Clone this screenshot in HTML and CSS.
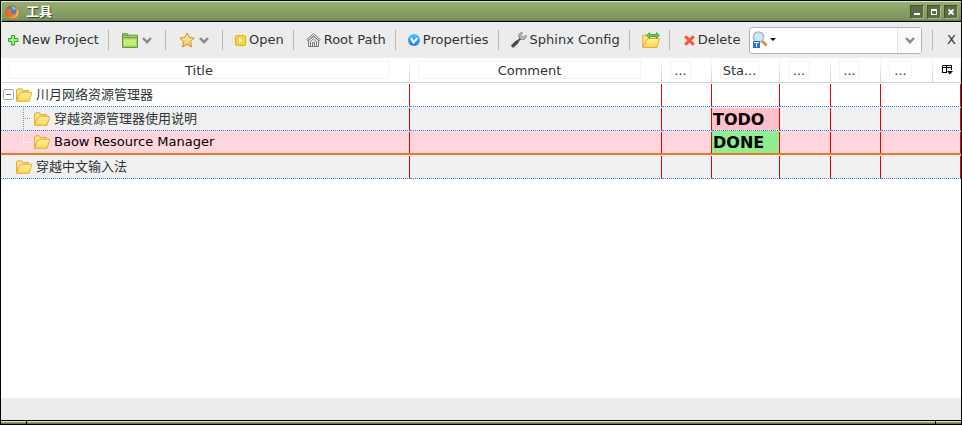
FILE: index.html
```html
<!DOCTYPE html>
<html lang="zh-CN">
<head>
<meta charset="utf-8">
<title>工具</title>
<link rel="stylesheet" href="styles.css">
</head>
<body>
<svg class="defs" aria-hidden="true">
  <defs>
    <linearGradient id="gold" x1="0" y1="0" x2="0" y2="1"><stop offset="0" stop-color="#fff0a0"/><stop offset="1" stop-color="#fbd650"/></linearGradient>
    <linearGradient id="star" x1="0" y1="0" x2="0" y2="1"><stop offset="0" stop-color="#fff8d0"/><stop offset="1" stop-color="#f8c040"/></linearGradient>
    <linearGradient id="blue" x1="0" y1="0" x2="0" y2="1"><stop offset="0" stop-color="#4cc4ff"/><stop offset="1" stop-color="#1a78ee"/></linearGradient>
    <linearGradient id="fox" x1="0" y1="0" x2="1" y2="1"><stop offset="0" stop-color="#b8542c"/><stop offset=".5" stop-color="#e86a1c"/><stop offset="1" stop-color="#ffc040"/></linearGradient>
    <symbol id="folder" viewBox="0 0 17 14">
      <path d="M1.500 12.500V2l1-1.200h4L8 2.500h5.500V5" fill="#fbe080" stroke="#e2ac32"/>
      <path d="M1.500 13.300 4 6.500 6 5l1-.8h9.300v2L14 13.300z" fill="url(#gold)" stroke="#e2ac32"/>
    </symbol>
    <symbol id="chevron" viewBox="0 0 10 7"><path d="m1 1 4 4.200L9 1" fill="none" stroke="#8c8c8c" stroke-width="2.500"/></symbol>
  </defs>
</svg>
<div class="window">
  <header class="titlebar">
    <svg class="fox" width="14" height="14" viewBox="0 0 14 14"><circle cx="7" cy="7" r="6.800" fill="url(#fox)"/><circle cx="7.500" cy="5.500" r="4.300" fill="#4a80c4"/><path d="M7 1.500c2 .2 3.500 1 4 2.500L9 5 7 3z" fill="#90c4ee"/><path d="M1 3l2 1 2.500.2L7 6 5.500 7l1 1.500 3 .2C8 11 5 11.500 3 9.500z" fill="#e8742a"/><path d="M11.500 3c2.300 3 1.500 7-1.500 9 2-3 2-5 1.500-9z" fill="#ffd060"/></svg>
    <h1>工具</h1>
    <div class="controls">
      <button aria-label="Minimize"><svg width="8" height="8"><path d="M1 5h6v2H1z" fill="#fff"/></svg></button>
      <button aria-label="Maximize"><svg width="8" height="8"><path d="M1 1h6v6H1zM2 3v3h4V3z" fill="#fff" fill-rule="evenodd"/></svg></button>
      <button aria-label="Close window"><svg width="8" height="8"><path d="m1.500 1.500 5 5m0-5-5 5" stroke="#fff" stroke-width="2"/></svg></button>
    </div>
  </header>
  <nav class="toolbar">
    <button class="first"><svg width="11" height="11" viewBox="0 0 11 11"><path d="M3.500 .5h3v3h3.500v3H6.500V10h-3V6.500H.5v-3h3z" fill="#a4f074" stroke="#2fa52f"/></svg>New Project</button>
    <button class="menu" aria-label="New folder"><svg width="16" height="15" viewBox="0 0 16 15"><path d="M.5 14.500V.7h5l1 1.500h9v12.300z" fill="#a5cf68" stroke="#619a38"/><path d="M1 4.500h14M1.500 2.500h5" stroke="#6fa346"/><path d="M2 6.500h12v6H2z" fill="#c4ec80"/></svg><svg width="10" height="7"><use href="#chevron"/></svg></button>
    <button class="menu" aria-label="Bookmarks"><svg width="16" height="16" viewBox="0 0 16 16"><path d="m8 1 2.200 4.500 5 .6-3.700 3.600 1 5.200L8 12.400l-4.500 2.500 1-5.200L.8 6.100l5-.6z" fill="url(#star)" stroke="#d78426"/></svg><svg width="10" height="7"><use href="#chevron"/></svg></button>
    <button><svg width="11" height="11" viewBox="0 0 11 11"><rect x=".5" y=".5" width="10" height="10" rx="1" fill="#f4d438" stroke="#dfb51c"/><path d="M4 2.500v6L7.500 5.500z" fill="#fff"/></svg>Open</button>
    <button><svg width="15" height="14" viewBox="0 0 15 14"><g fill="none" stroke="#777"><path d="M.7 6.500 7.500.7l6.800 5.800-1 1.200-5.800-5-5.800 5z" fill="#fff"/><path d="M2.500 7.500v6h10v-6L7.500 3.500z" fill="#eee"/><path d="M4.500 13V8.500L7.500 6l3 2.500V13M6.500 13V9.500h2V13"/></g></svg>Root Path</button>
    <button><svg width="12" height="12" viewBox="0 0 12 12"><circle cx="6" cy="6" r="6" fill="url(#blue)"/><path d="m3 4 2.500 4.500L9.500 4" fill="none" stroke="#fff" stroke-width="2"/></svg>Properties</button>
    <button><svg width="16" height="16" viewBox="0 0 16 16"><path d="M9.500 6.500 6 10" stroke="#555" stroke-width="2"/><path d="M6 10l-4 3.800" stroke="#494949" stroke-width="3.400" stroke-linecap="round"/><path d="M8 5c-1-2.500 1-4.800 3.500-4.300L10 2.500l.7 2.300 2.300.4 2-2c.8 2.500-1.500 5-4.300 4.300z" fill="#c5c5c5" stroke="#808080"/></svg>Sphinx Config</button>
    <button aria-label="Exchange folder"><svg width="18" height="17" viewBox="0 0 18 17"><path d="M.7 15V4l1-1h4l1.500 1.500H14v3" fill="#fbe080" stroke="#e2ac32"/><path d="m1 15.500 3-7L7 6.500h10.300L15 15.500z" fill="url(#gold)" stroke="#e2ac32"/><path d="m4.500 3.500 3-3v2h7v-2l3 3-3 3v-2h-7v2z" fill="#62cf50" stroke="#329a38" stroke-width=".7"/></svg></button>
    <button class="delete"><svg width="11" height="11" viewBox="0 0 11 11"><path d="m1.200 1.200 8.600 8.600m0-8.600L1.200 9.800" stroke="#ff5230" stroke-width="3"/></svg>Delete</button>
    <div class="search">
      <button aria-label="Search options"><svg width="24" height="18" viewBox="0 0 24 18"><path d="m9.500 9.500 5 5" stroke="#d98b32" stroke-width="2.500"/><circle cx="6.500" cy="6" r="5.200" fill="#c9e8fa" stroke="#a8b0bc" stroke-width="1.300"/><path d="M1 10h7v7H1z" fill="#2277d6"/><path d="M2 11.500h5M4.500 12v4" stroke="#fff"/><path d="M18 7h6l-3 3z" fill="#000"/></svg></button>
      <input type="text" aria-label="Search">
      <button class="drop" aria-label="Search history"><svg width="10" height="7"><use href="#chevron"/></svg></button>
    </div>
    <button class="close">X</button>
  </nav>
  <main>
    <table>
      <colgroup><col><col class="comment"><col class="c50"><col class="c68"><col class="c51"><col class="c50"><col class="c52"><col class="c28"></colgroup>
      <thead><tr><th><span>Title</span></th><th><span>Comment</span></th><th><span>...</span></th><th><span>Sta...</span></th><th><span>...</span></th><th><span>...</span></th><th><span>...</span></th><th class="picker"><button aria-label="Choose columns"><svg width="11" height="10" viewBox="0 0 11 10"><path d="M.5 7.500v-7h9V5M.5 2.500h9M4.500 1v7M0 7.500h5" fill="none" stroke="#000"/><path d="M5 6h6L8 9.500z"/></svg></button></th></tr></thead>
      <tbody>
        <tr><td><div class="node"><button class="toggle" aria-label="Collapse"></button><svg width="17" height="14"><use href="#folder"/></svg>川月网络资源管理器</div></td><td></td><td></td><td></td><td></td><td></td><td colspan="2"></td></tr>
        <tr class="odd"><td><div class="node child"><i class="branch"></i><svg width="17" height="14"><use href="#folder"/></svg>穿越资源管理器使用说明</div></td><td></td><td></td><td><div class="status todo">TODO</div></td><td></td><td></td><td colspan="2"></td></tr>
        <tr class="selected"><td><div class="node child"><i class="branch"></i><svg width="17" height="14"><use href="#folder"/></svg>Baow Resource Manager</div></td><td></td><td></td><td><div class="status done">DONE</div></td><td></td><td></td><td colspan="2"></td></tr>
        <tr class="odd"><td><div class="node leaf"><svg width="17" height="14"><use href="#folder"/></svg>穿越中文输入法</div></td><td></td><td></td><td></td><td></td><td></td><td colspan="2"></td></tr>
      </tbody>
    </table>
  </main>
  <footer class="statusbar"></footer>
  <div class="grip"><i></i><i></i><i></i></div>
</div>
</body>
</html>
```
FILE: styles.css
```css
* { box-sizing: border-box; }
body { margin: 0; font: 13px/16px "DejaVu Sans", "Noto Sans CJK SC", sans-serif; color: #2e3436; }
button { font: inherit; color: inherit; background: none; border: 0; padding: 0; display: flex; align-items: center; }
svg { flex: none; display: block; }
.defs { position: absolute; width: 0; height: 0; }
.window { min-height: 100vh; display: flex; flex-direction: column; background: #fff; border: 1px solid #000; }

.titlebar { height: 21px; display: flex; align-items: center; padding: 0 3px 0 3px; border-top: 1px solid #dcebb0; border-left: 1px solid #c8da98; border-bottom: 1px solid #000; background: linear-gradient(#96ad72, #7e955c 90%, #64794a); }
.titlebar h1 { flex: 1; margin: 0 0 0 7px; font-size: 13px; font-weight: bold; line-height: 16px; color: #fff; text-shadow: 1px 1px 1px #33402a; }
.controls { display: flex; gap: 3px; }
.controls button { width: 14px; height: 14px; justify-content: center; background: #5b6b43; border: 1px solid #a5b888; border-top-color: #46532f; border-left-color: #46532f; }

.toolbar { height: 36px; display: flex; align-items: center; background: #ececec; }
.toolbar > button { height: 20px; gap: 3px; padding: 0 9px 0 12px; border-right: 1px solid #b6b6b6; white-space: nowrap; }
.toolbar > .first { padding-left: 7px; }
.toolbar > .menu { gap: 4px; padding: 0 13px; }
.toolbar > .delete { padding-left: 14px; border-right: 0; }
.toolbar > .close { margin-left: 10px; padding: 0 5px 0 14px; border-right: 0; border-left: 1px solid #b6b6b6; }
.search { flex: 1; min-width: 80px; height: 27px; display: flex; align-items: center; padding-left: 2px; background: #fff; border: 1px solid #b4b4b4; border-radius: 3px; }
.search input { flex: 1; min-width: 0; border: 0; padding: 0 4px; background: none; font: inherit; }
.search .drop { align-self: stretch; width: 24px; justify-content: center; border-left: 1px solid #e4e4e4; background: #fafafa; }

main { flex: 1; background: #fff; }
table { width: 100%; table-layout: fixed; border-collapse: separate; border-spacing: 0; }
.comment { width: 26.25%; }
.c50 { width: 50px; }
.c68 { width: 68px; }
.c51 { width: 51px; }
.c52 { width: 52px; }
.c28 { width: 28px; }
th { height: 25px; padding: 0 21px 0 8px; font-weight: normal; border-bottom: 1px solid #d4d4d4; background: linear-gradient(#fff, #ccc) no-repeat right / 1px 100%; }
th span { display: block; height: 18px; border: 1px solid #f3f3f3; line-height: 18px; white-space: nowrap; }
th.picker { padding: 0 0 0 9px; }
td { height: 24px; padding: 0; border-bottom: 1px dotted #2f7fe8; background: linear-gradient(#e60000, #e60000) no-repeat right 1px / 1px 100%; }
.odd td { background-color: #f0f0f0; }
.selected td { background-color: #ffd6de; border-bottom: 2px solid #e77b26; }
.selected { color: #000; }
.node { height: 22px; display: flex; align-items: center; gap: 4px; padding-left: 2px; line-height: 18px; white-space: nowrap; }
.leaf { padding-left: 14px; }
.toggle { width: 11px; height: 11px; margin-right: -3px; border: 1px solid #aaa; border-radius: 2px; background: linear-gradient(#777, #777) no-repeat center / 5px 1px; }
.child { padding-left: 22px; }
.branch { align-self: stretch; width: 8px; margin-right: -2px; background: repeating-linear-gradient(#999 0 1px, transparent 1px 2px) no-repeat left / 1px 100%, repeating-linear-gradient(90deg, #999 0 1px, transparent 1px 2px) no-repeat center / 100% 1px; }
.selected .branch { background: repeating-linear-gradient(#fff 0 1px, transparent 1px 2px) no-repeat left top / 1px 50%, repeating-linear-gradient(90deg, #fff 0 1px, transparent 1px 2px) no-repeat center / 100% 1px; }
.status { height: 22px; margin-right: 1px; padding-left: 1px; font-size: 16px; line-height: 24px; font-weight: bold; color: #000; }
.todo { background: #ffc0cb; }
.done { background: #90ee90; }

.statusbar { height: 22px; background: #ececec; }
.grip { height: 4px; display: flex; border-top: 1px solid #000; }
.grip i { flex: 1; background: linear-gradient(#d5e6a8 33%, #8ca366 33% 66%, #66794a 66%); }
.grip i:first-child, .grip i:last-child { flex: none; width: 25px; }
.grip i:last-child { width: 26px; }
.grip i + i { border-left: 1px solid #000; }
```
